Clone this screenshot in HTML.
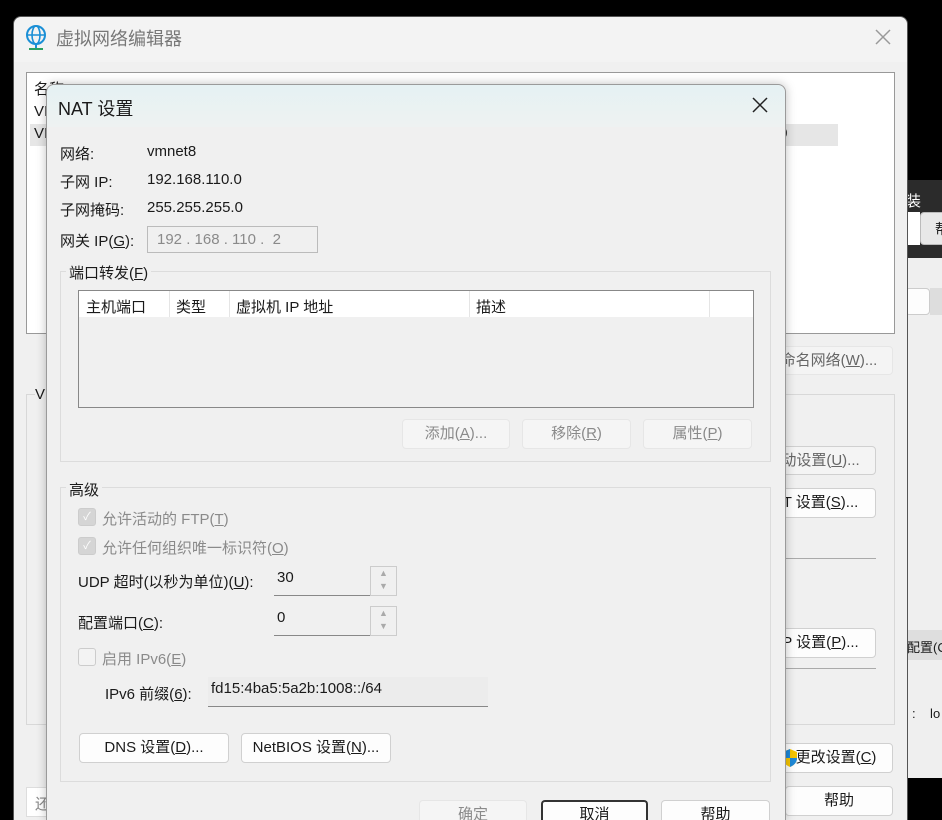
<!DOCTYPE html>
<html style="width:942px;height:820px;overflow:hidden"><head><meta charset="utf-8"><style>
*{margin:0;padding:0;box-sizing:border-box}
body{width:942px;height:820px;background:#000;position:relative;overflow:hidden;font-family:"Liberation Sans","Noto Sans CJK SC",sans-serif;font-size:15px;color:#1a1a1a}
.a{position:absolute;white-space:nowrap}
.btn{position:absolute;background:#fdfdfd;border:1px solid #d0d0d0;border-radius:4px;text-align:center;font-size:15px}
.dis{background:#f5f5f5;border-color:#e6e6e6;color:#8a8a8a}
.grp{position:absolute;border:1px solid #dcdcdc}
.lbl{position:absolute;background:#f0f0f0;padding:0 3px;font-size:15px}
.chk{position:absolute;width:18px;height:18px;border:1px solid #ccc;border-radius:3px;background:#d5d5d5;color:#fff;font-size:11px;text-align:center;line-height:16px}
.spin{position:absolute;background:#f0f0f0;border-bottom:1px solid #888}
u{text-decoration:underline}
</style></head><body>
<div class="a" style="left:900px;top:180px;width:42px;height:78px;background:#2b2b2b"></div>
<div class="a" style="left:906px;top:190px;color:#fff;font-size:15px">装</div>
<div class="a" style="left:900px;top:212px;width:20px;height:33px;background:#fff"></div>
<div class="a" style="left:920px;top:212px;width:22px;height:33px;background:#e8e8e8;border:1px solid #bbb;border-right:0;border-radius:4px 0 0 4px;font-size:14px;padding:6px 0 0 14px;overflow:hidden">帮</div>
<div class="a" style="left:900px;top:258px;width:42px;height:520px;background:#efefef"></div>
<div class="a" style="left:905px;top:288px;width:25px;height:27px;background:#fdfdfd;border:1px solid #ccc;border-radius:4px"></div>
<div class="a" style="left:930px;top:288px;width:12px;height:27px;background:#ddd"></div>
<div class="a" style="left:905px;top:630px;width:37px;height:30px;background:#dedede;font-size:13px;padding:7px 0 0 2px;overflow:hidden">配置(C</div>
<div class="a" style="left:912px;top:706px;font-size:13px">:&nbsp;&nbsp;&nbsp;&nbsp;lo</div>

<div class="a" style="left:13px;top:16px;width:895px;height:804px;background:#f0f0f0;border-radius:8px 8px 0 0;border:1px solid #555;border-bottom:0"></div>
<div class="a" style="left:14px;top:17px;width:893px;height:45px;background:#f3f3f3;border-radius:8px 8px 0 0"></div>
<svg class="a" style="left:25px;top:24px" width="22" height="26" viewBox="0 0 22 26"><circle cx="11" cy="11" r="9" fill="none" stroke="#1a8fd6" stroke-width="2"/><ellipse cx="11" cy="11" rx="4" ry="9" fill="none" stroke="#1a8fd6" stroke-width="1.6"/><line x1="2" y1="11" x2="20" y2="11" stroke="#1a8fd6" stroke-width="1.6"/><line x1="11" y1="20" x2="11" y2="24" stroke="#1a8fd6" stroke-width="2"/><line x1="4" y1="25" x2="18" y2="25" stroke="#2aa060" stroke-width="2"/></svg>
<div class="a" style="left:56px;top:25px;font-size:18px;color:#777">虚拟网络编辑器</div>
<svg class="a" style="left:875px;top:29px" width="16" height="16"><path d="M1 1L15 15M15 1L1 15" stroke="#999" stroke-width="1.5"/></svg>
<div class="a" style="left:26px;top:72px;width:869px;height:262px;background:#fff;border:1px solid #999"></div>
<div class="a" style="left:34px;top:78px;font-size:15px">名称</div>
<div class="a" style="left:34px;top:103px">VI</div>
<div class="a" style="left:30px;top:124px;width:808px;height:22px;background:#e6e6e6"></div>
<div class="a" style="left:34px;top:125px">VI</div>
<div class="a" style="left:778px;top:103px">0</div>
<div class="a" style="left:775px;top:125px">.0</div>
<div class="grp" style="left:26px;top:394px;width:869px;height:331px;border-color:#d8d8d8"></div>
<div class="a" style="left:35px;top:386px;background:#f0f0f0">VI</div>
<div class="btn dis" style="left:765px;top:346px;width:128px;height:29px;line-height:27px;color:#666;background:#f4f4f4">命名网络(<u>W</u>)...</div>
<div class="btn" style="left:765px;top:446px;width:111px;height:29px;line-height:27px;color:#666;background:#f4f4f4">动设置(<u>U</u>)...</div>
<div class="btn" style="left:765px;top:488px;width:111px;height:30px;line-height:28px">T 设置(<u>S</u>)...</div>
<div class="a" style="left:785px;top:558px;width:91px;height:1px;background:#aaa"></div>
<div class="btn" style="left:765px;top:628px;width:111px;height:30px;line-height:28px">P 设置(<u>P</u>)...</div>
<div class="a" style="left:785px;top:668px;width:91px;height:1px;background:#aaa"></div>
<div class="btn" style="left:765px;top:743px;width:128px;height:30px;line-height:28px;padding-left:14px">更改设置(<u>C</u>)</div>
<svg class="a" style="left:782px;top:748px" width="16" height="20" viewBox="0 0 16 20"><path d="M8 1 L15 4 L15 10 Q15 16 8 19 Q1 16 1 10 L1 4 Z" fill="#f5c400"/><path d="M8 10 L15 10 Q15 16 8 19 Z" fill="#1e88d8"/><path d="M1 10 L8 10 L8 1 L1 4 Z" fill="#1e88d8"/></svg>
<div class="btn" style="left:785px;top:786px;width:108px;height:30px;line-height:28px">帮助</div>
<div class="a" style="left:26px;top:787px;width:40px;height:30px;background:#fff;border:1px solid #ddd;padding:5px 0 0 8px;color:#888">还</div>

<div class="a" style="left:46px;top:84px;width:740px;height:736px;background:#f0f0f0;border:1px solid #9a9a9a;border-bottom:0;border-radius:8px 8px 0 0;box-shadow:0 0 10px rgba(0,0,0,.25)"></div>
<div class="a" style="left:47px;top:85px;width:738px;height:42px;background:linear-gradient(#e5f1f3,#eef2f2);border-radius:8px 8px 0 0"></div>
<div class="a" style="left:58px;top:95px;font-size:18px">NAT 设置</div>
<svg class="a" style="left:752px;top:97px" width="16" height="16"><path d="M1 1L15 15M15 1L1 15" stroke="#222" stroke-width="1.5"/></svg>

<div class="a" style="left:60px;top:143px">网络:</div><div class="a" style="left:147px;top:143px">vmnet8</div>
<div class="a" style="left:60px;top:171px">子网 IP:</div><div class="a" style="left:147px;top:171px">192.168.110.0</div>
<div class="a" style="left:60px;top:199px">子网掩码:</div><div class="a" style="left:147px;top:199px">255.255.255.0</div>
<div class="a" style="left:60px;top:230px">网关 IP(<u>G</u>):</div>
<div class="a" style="left:147px;top:226px;width:171px;height:27px;border:1px solid #bbb;background:#f0f0f0;color:#8a8a8a;padding:4px 0 0 9px">192 . 168 . 110 .&nbsp; 2</div>

<div class="grp" style="left:60px;top:271px;width:711px;height:191px"></div>
<div class="lbl" style="left:66px;top:262px">端口转发(<u>F</u>)</div>
<div class="a" style="left:78px;top:290px;width:676px;height:118px;background:#f0f0f0;border:1px solid #888"></div>
<div class="a" style="left:79px;top:291px;width:674px;height:26px;background:#fff"></div>
<div class="a" style="left:86px;top:296px">主机端口</div>
<div class="a" style="left:169px;top:291px;width:1px;height:26px;background:#e5e5e5"></div>
<div class="a" style="left:176px;top:296px">类型</div>
<div class="a" style="left:229px;top:291px;width:1px;height:26px;background:#e5e5e5"></div>
<div class="a" style="left:236px;top:296px">虚拟机 IP 地址</div>
<div class="a" style="left:469px;top:291px;width:1px;height:26px;background:#e5e5e5"></div>
<div class="a" style="left:476px;top:296px">描述</div>
<div class="a" style="left:709px;top:291px;width:1px;height:26px;background:#e5e5e5"></div>
<div class="btn dis" style="left:402px;top:419px;width:108px;height:30px;line-height:28px">添加(<u>A</u>)...</div>
<div class="btn dis" style="left:522px;top:419px;width:109px;height:30px;line-height:28px">移除(<u>R</u>)</div>
<div class="btn dis" style="left:643px;top:419px;width:109px;height:30px;line-height:28px">属性(<u>P</u>)</div>

<div class="grp" style="left:60px;top:487px;width:711px;height:295px"></div>
<div class="lbl" style="left:66px;top:479px">高级</div>
<div class="chk" style="left:78px;top:508px">✓</div><div class="a" style="left:102px;top:508px;color:#8a8a8a">允许活动的 FTP(<u>T</u>)</div>
<div class="chk" style="left:78px;top:537px">✓</div><div class="a" style="left:102px;top:537px;color:#8a8a8a">允许任何组织唯一标识符(<u>O</u>)</div>
<div class="a" style="left:78px;top:571px">UDP 超时(以秒为单位)(<u>U</u>):</div>
<div class="spin" style="left:274px;top:566px;width:96px;height:30px;padding:3px 0 0 3px">30</div>
<div class="a" style="left:370px;top:566px;width:27px;height:30px;border:1px solid #ccc;font-size:9px;color:#aaa;text-align:center;line-height:13px">▲<br>▼</div>
<div class="a" style="left:78px;top:612px">配置端口(<u>C</u>):</div>
<div class="spin" style="left:274px;top:606px;width:96px;height:30px;padding:3px 0 0 3px">0</div>
<div class="a" style="left:370px;top:606px;width:27px;height:30px;border:1px solid #ccc;font-size:9px;color:#aaa;text-align:center;line-height:13px">▲<br>▼</div>
<div class="chk" style="left:78px;top:648px;background:#f3f3f3"></div><div class="a" style="left:102px;top:648px;color:#8a8a8a">启用 IPv6(<u>E</u>)</div>
<div class="a" style="left:105px;top:683px">IPv6 前缀(<u>6</u>):</div>
<div class="a" style="left:208px;top:677px;width:280px;height:30px;background:#ececec;border-bottom:1px solid #888;padding:3px 0 0 3px">fd15:4ba5:5a2b:1008::/64</div>
<div class="btn" style="left:79px;top:733px;width:150px;height:30px;line-height:28px">DNS 设置(<u>D</u>)...</div>
<div class="btn" style="left:241px;top:733px;width:150px;height:30px;line-height:28px">NetBIOS 设置(<u>N</u>)...</div>

<div class="btn dis" style="left:419px;top:800px;width:108px;height:20px;line-height:28px;border-radius:4px 4px 0 0;border-bottom:0;overflow:hidden">确定</div>
<div class="btn" style="left:541px;top:800px;width:107px;height:20px;line-height:26px;border:2px solid #333;border-bottom:0;border-radius:4px 4px 0 0;overflow:hidden">取消</div>
<div class="btn" style="left:661px;top:800px;width:109px;height:20px;line-height:28px;border-bottom:0;border-radius:4px 4px 0 0;overflow:hidden">帮助</div>
</body></html>
